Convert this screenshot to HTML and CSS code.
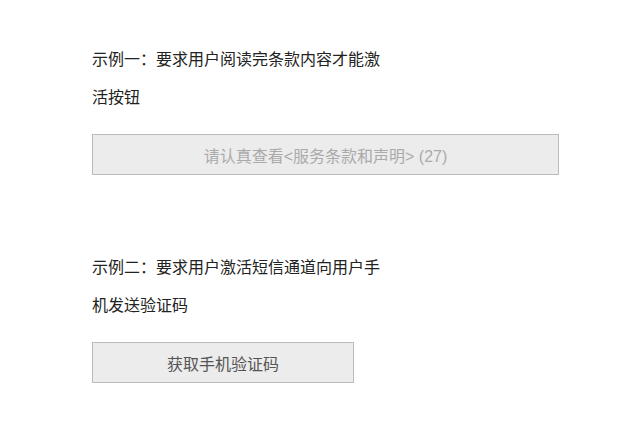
FILE: index.html
```html
<!DOCTYPE html>
<html lang="zh-CN">
<head>
  <meta charset="UTF-8">
  <meta name="viewport" content="width=device-width, initial-scale=1.0">
  <title>示例</title>
  <link rel="stylesheet" href="styles.css">
</head>
<body>
  <div class="page">
    <div class="demo">
      <p class="demo-text">示例一：要求用户阅读完条款内容才能激活按钮</p>
      <button class="demo-btn wide" disabled>请认真查看&lt;服务条款和声明&gt; (27)</button>
    </div>
    <div class="demo">
      <p class="demo-text">示例二：要求用户激活短信通道向用户手机发送验证码</p>
      <button class="demo-btn">获取手机验证码</button>
    </div>
  </div>
</body>
</html>
```

FILE: styles.css
```css
body, html {
  margin: 0;
  padding: 0;
  background-color: white;
  font-family: "Liberation Sans", "Noto Sans CJK SC", sans-serif;
  color: #222;
}

.page {
  display: flex;
  flex-direction: column;
  gap: 74px;
  padding: 41px 0 0 92px;
}

.demo {
  display: flex;
  flex-direction: column;
  align-items: flex-start;
  gap: 17px;
}

.demo-text {
  width: 300px;
  margin: 0;
  font-size: 16px;
  line-height: 38px;
}

.demo-btn {
  box-sizing: border-box;
  width: 262px;
  height: 41px;
  padding: 0;
  border: 1px solid #bbb;
  background-color: #ececec;
  color: #555;
  font-family: "Liberation Sans", "Noto Sans CJK SC", sans-serif;
  font-size: 16px;
  cursor: pointer;
}

.demo-btn.wide {
  width: 467px;
}

.demo-btn:disabled {
  color: #aaa;
  cursor: default;
}
```
